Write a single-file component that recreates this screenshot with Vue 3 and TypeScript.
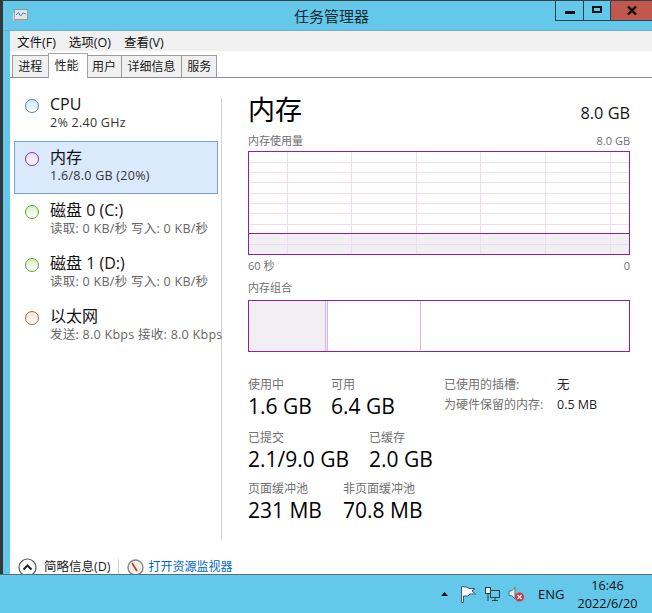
<script setup lang="ts">
interface Dev { name: string; sub: string; color: string; fill: string; selected?: boolean; dim?: boolean }
const devices: Dev[] = [
  { name: 'CPU', sub: '2% 2.40 GHz', color: '#3d8fc4', fill: '#d3e7f5' },
  { name: '内存', sub: '1.6/8.0 GB (20%)', color: '#8e2aa8', fill: '#f0d9f6', selected: true },
  { name: '磁盘 0 (C:)', sub: '读取: 0 KB/秒 写入: 0 KB/秒', color: '#5da82a', fill: '#d9f0c9', dim: true },
  { name: '磁盘 1 (D:)', sub: '读取: 0 KB/秒 写入: 0 KB/秒', color: '#5da82a', fill: '#d9f0c9', dim: true },
  { name: '以太网', sub: '发送: 8.0 Kbps 接收: 8.0 Kbps', color: '#b5672a', fill: '#fbe6d6', dim: true },
]
const vLines = [39, 103, 168, 232, 297, 362]
const hLines = [11, 21, 31, 42, 52, 62, 73, 93]
const tabs = ['进程', '性能', '用户', '详细信息', '服务']
const menus = ['文件(F)', '选项(O)', '查看(V)']
const rows = [
  [{ l: '使用中', v: '1.6 GB', w: 83 }, { l: '可用', v: '6.4 GB', w: 113 }],
  [{ l: '已提交', v: '2.1/9.0 GB', w: 121 }, { l: '已缓存', v: '2.0 GB', w: 75 }],
  [{ l: '页面缓冲池', v: '231 MB', w: 95 }, { l: '非页面缓冲池', v: '70.8 MB', w: 101 }],
]
</script>

<template>
  <div class="screen">
    <div class="window">
      <header class="titlebar">
        <svg class="appicon" width="16" height="16" viewBox="0 0 16 16">
          <rect x="2.5" y="1.5" width="13" height="10" fill="#dfe6e8" stroke="#8f9a9e" />
          <path d="M4 7 L6.5 4.5 L8.5 8 L11 5 L14 6" fill="none" stroke="#4d87b0" />
          <path d="M6 12h6v2H5z" fill="#a9b2b5" />
          <rect x="0.5" y="5" width="2" height="8" fill="#cfd6d8" stroke="#9aa4a8" stroke-width="0.5" />
        </svg>
        <div class="title">任务管理器</div>
        <div class="caption">
          <div class="cbtn">
            <span class="min"></span>
          </div>
          <div class="cbtn narrow">
            <span class="max"></span>
          </div>
          <div class="cbtn close">
            <svg width="10" height="9" viewBox="0 0 10 9"><path d="M1 0.5 L9 8.5 M9 0.5 L1 8.5" stroke="#111" stroke-width="2.4" fill="none" /></svg>
          </div>
        </div>
      </header>
      <nav class="menubar">
        <span v-for="m in menus" :key="m" class="menu">{{ m }}</span>
      </nav>
      <div class="tabs">
        <div v-for="t in tabs" :key="t" class="tab" :class="{ active: t === '性能' }">{{ t }}</div>
      </div>
      <main class="content">
        <aside class="side">
          <div v-for="d in devices" :key="d.name" class="dev" :class="{ sel: d.selected }">
            <span class="dot" :style="{ borderColor: d.color, background: `linear-gradient(180deg, ${d.fill}, #fff)` }"></span>
            <div class="devtext">
              <div class="devname">{{ d.name }}</div>
              <div class="devsub" :class="{ dim: d.dim }">{{ d.sub }}</div>
            </div>
          </div>
        </aside>
        <section class="detail">
          <div class="head">
            <h1>内存</h1>
            <span class="total">8.0 GB</span>
          </div>
          <div class="caprow usage"><span>内存使用量</span><span>8.0 GB</span></div>
          <svg class="chart" width="382" height="104" viewBox="0 0 382 104">
            <rect x="0" y="82" width="382" height="22" fill="#f1eff4" />
            <line v-for="x in vLines" :key="x" :x1="x + 0.5" :x2="x + 0.5" y1="0" y2="104" stroke="#eedcf3" />
            <line v-for="y in hLines" :key="y" x1="0" x2="382" :y1="y + 0.5" :y2="y + 0.5" stroke="#eedcf3" />
            <line x1="0" x2="382" y1="82.5" y2="82.5" stroke="#8d1fa8" />
            <rect x="0.5" y="0.5" width="381" height="103" fill="none" stroke="#8d1fa8" />
          </svg>
          <div class="caprow axis"><span>60 秒</span><span>0</span></div>
          <div class="caprow combo"><span>内存组合</span></div>
          <div class="compo">
            <div class="used"></div>
            <div class="mod"></div>
            <div class="standby"></div>
            <div class="free"></div>
          </div>
          <div class="stats">
            <div class="statcol">
              <div v-for="(r, i) in rows" :key="i" class="statrow">
                <div v-for="s in r" :key="s.l" class="stat" :style="{ width: s.w + 'px' }">
                  <div class="slabel">{{ s.l }}</div>
                  <div class="sval">{{ s.v }}</div>
                </div>
              </div>
            </div>
            <div class="props">
              <div class="prop"><span class="pk">已使用的插槽:</span><span class="pv">无</span></div>
              <div class="prop"><span class="pk">为硬件保留的内存:</span><span class="pv">0.5 MB</span></div>
            </div>
          </div>
        </section>
      </main>
      <footer class="foot">
        <svg class="fi" width="19" height="19" viewBox="0 0 19 19">
          <circle cx="9.5" cy="9.5" r="8.5" fill="#fff" stroke="#555" stroke-width="1.2" />
          <path d="M5.5 11.5 L9.5 7.5 L13.5 11.5" fill="none" stroke="#222" stroke-width="2" />
        </svg>
        <span class="brief">简略信息(D)</span>
        <span class="fsep"></span>
        <svg class="fi" width="17" height="17" viewBox="0 0 17 17">
          <circle cx="8.5" cy="8.5" r="7.5" fill="#f3efe9" stroke="#8b8b8b" stroke-width="1.5" />
          <path d="M5 4 L10 12" stroke="#c0392b" stroke-width="1.6" />
        </svg>
        <span class="link">打开资源监视器</span>
      </footer>
    </div>
    <div class="taskbar">
      <svg class="arrow" width="7" height="4" viewBox="0 0 7 4"><path d="M3.5 0 L7 4 H0z" fill="#111" /></svg>
      <svg class="tray" width="16" height="17" viewBox="0 0 16 17">
        <path d="M1.5 0.5 V16.5 H3.5 V10 H8 L10 8 H15.5 L12 5 L15 2.5 H9 L7 1 H3.5 V0.5z" fill="#f4f8fa" stroke="#3a5a68" />
      </svg>
      <svg class="tray" width="16" height="16" viewBox="0 0 16 16">
        <rect x="1.5" y="1.5" width="5" height="6" fill="#eaf4f8" stroke="#26404c" />
        <rect x="6.5" y="4.5" width="9" height="7" fill="#63c8ea" stroke="#26404c" />
        <path d="M4 7.5 V15 M8 14.5 H14 M11 11.5 V14.5" stroke="#26404c" fill="none" />
      </svg>
      <svg class="tray" width="16" height="16" viewBox="0 0 16 16">
        <path d="M1 5 H3.5 L7 1.5 V13 L3.5 9.5 H1z" fill="#e6eef2" stroke="#55707d" />
        <circle cx="11.5" cy="11" r="4.5" fill="#d8343f" />
        <path d="M9.5 9 L13.5 13 M13.5 9 L9.5 13" stroke="#fff" stroke-width="1.2" />
      </svg>
      <span class="eng">ENG</span>
      <div class="clock"><div>16:46</div><div>2022/6/20</div></div>
    </div>
  </div>
</template>

<style>
html, body { margin: 0; padding: 0; background: #63c8ea; }
</style>

<style scoped>
.screen {
  width: 652px; height: 613px; overflow: hidden; display: flex; flex-direction: column;
  font-family: "Open Sans", "Noto Sans CJK SC", sans-serif; color: #111; background: #63c8ea;
}
.window {
  height: 574px; flex: none; box-sizing: border-box; display: flex; flex-direction: column;
  border-left: 3px solid #33383b; padding-left: 7px; border-top: 1px solid #3a3f42; overflow: hidden;
  background: #63c8ea;
}
.titlebar { flex: none; display: grid; grid-template-columns: 1fr auto 1fr; margin-left: -7px; border-bottom: 1px solid #73adc8; height: 29px; }
.appicon { margin: 7px 0 0 9px; }
.title { font-size: 15px; line-height: 30px; color: #1a2a30; transform: translateX(4px); }
.caption { display: flex; justify-content: flex-end; align-items: flex-start; }
.cbtn {
  width: 28px; height: 20px; box-sizing: border-box; border: 1px solid #22404e; border-top: 0; border-right: 0;
  display: flex; align-items: center; justify-content: center;
}
.cbtn.narrow { width: 27px; }
.cbtn.close { width: 42px; background: #c1584e; }
.min { width: 10px; height: 3px; background: #111; margin-top: 4px; }
.max { border: 2px solid #111; width: 6px; height: 3px; margin-top: -2px; }
.menubar { height: 20px; flex: none; background: #f0f0f0; display: flex; align-items: center; padding-left: 7px; gap: 13px; font-size: 12.5px; }
.tabs { height: 27px; flex: none; background: #fff; border-bottom: 1px solid #8e8e92; box-sizing: border-box; display: flex; align-items: flex-end; padding-left: 2px; }
.tab {
  height: 22px; box-sizing: border-box; padding: 0 5.3px; font-size: 12px; line-height: 22px; background: #f0f0f0;
  border: 1px solid #9b9b9b; border-bottom: 0; margin-left: -1px; color: #1a1a1a;
}
.tab:first-child { margin-left: 0; }
.tab.active { height: 25px; background: #fff; line-height: 24px; margin-bottom: -1px; padding: 0 8px 0 6px; position: relative; margin-right: -1px; z-index: 1; border-color: #a5a5a5; }
.content { flex: 1; min-height: 0; background: #fff; display: flex; }
.side {
  width: 212px; flex: none; box-sizing: border-box; margin-top: 20px; height: 442px;
  border-right: 1px solid #d2d2d6; padding-left: 4px; white-space: nowrap;
}
.dev {
  width: 204px; height: 53px; box-sizing: border-box; border: 1px solid transparent; display: flex; align-items: flex-start;
  padding: 7px 0 0 10px;
}
.dev:first-child { margin-top: -10px; }
.dev.sel { background: #dae9fc; border-color: #7da2d8; }
.dot { width: 14px; height: 14px; border-radius: 50%; border: 1px solid; box-sizing: border-box; flex: none; margin-top: 3px; }
.devtext { margin-left: 11px; }
.devname { font-size: 16px; line-height: 17px; color: #111; }
.devsub { font-size: 12.5px; letter-spacing: 0.27px; line-height: 16px; margin-top: 2px; color: #333; }
.devsub.dim { color: #666; }
.detail { width: 382px; margin-left: 26px; flex: none; }
.head { display: flex; justify-content: space-between; align-items: flex-end; height: 40px; margin-top: 10px; }
h1 { margin: 0; font-size: 27px; font-weight: 400; line-height: 36px; color: #000; }
.total { font-size: 16.3px; line-height: 30px; color: #111; }
.caprow { display: flex; justify-content: space-between; font-size: 11px; line-height: 16px; color: #707070; }
.usage { margin-top: 5px; }
.chart { display: block; margin-top: 2px; }
.axis { margin-top: 3px; }
.combo { margin-top: 6px; }
.compo { height: 52px; margin-top: 4px; border: 1px solid #8d1fa8; box-sizing: border-box; display: flex; }
.used { width: 76px; background: #f1eff4; flex: none; }
.mod { width: 1px; border-left: 1px solid #d9b6e0; border-right: 1px solid #d9b6e0; background: #f1eff4; flex: none; }
.standby { width: 92px; flex: none; border-right: 1px solid #d9b6e0; }
.free { flex: 1; }
.stats { display: flex; margin-top: 25px; }
.statcol { width: 196px; flex: none; }
.statrow { display: flex; height: 53px; white-space: nowrap; }
.statrow:nth-child(2) { height: 51px; }
.stat { flex: none; }
.slabel { font-size: 12px; line-height: 16px; color: #707070; }
.sval { font-size: 21px; line-height: 26px; color: #000; }
.props { font-size: 12px; color: #707070; }
.prop { display: flex; height: 20px; line-height: 16px; white-space: nowrap; }
.pk { width: 113px; flex: none; }
.pv { color: #222; font-size: 12.5px; }
.foot { height: 20px; flex: none; background: #fff; display: flex; align-items: center; padding: 6px 0 0 8px; box-sizing: border-box; overflow: visible; }
.content { height: 0; }
.fi { flex: none; }
.brief { font-size: 12.5px; line-height: 14px; margin-left: 7px; color: #222; }
.fsep { width: 1px; height: 16px; background: #d0d0d0; margin: 0 8px; }
.link { font-size: 12px; line-height: 14px; color: #0066cc; margin-left: 4px; }
.taskbar {
  height: 39px; flex: none; box-sizing: border-box; border-top: 1px solid #5b6d78; background: #63c8ea; display: flex; align-items: center; padding-left: 441px; white-space: nowrap;
}
.arrow { margin-right: 12px; }
.tray { margin-right: 8px; }
.eng { font-size: 13px; margin-left: 6px; color: #111; }
.clock { font-size: 12.7px; line-height: 18px; text-align: center; margin-left: 12px; width: 62px; color: #111; }
</style>
